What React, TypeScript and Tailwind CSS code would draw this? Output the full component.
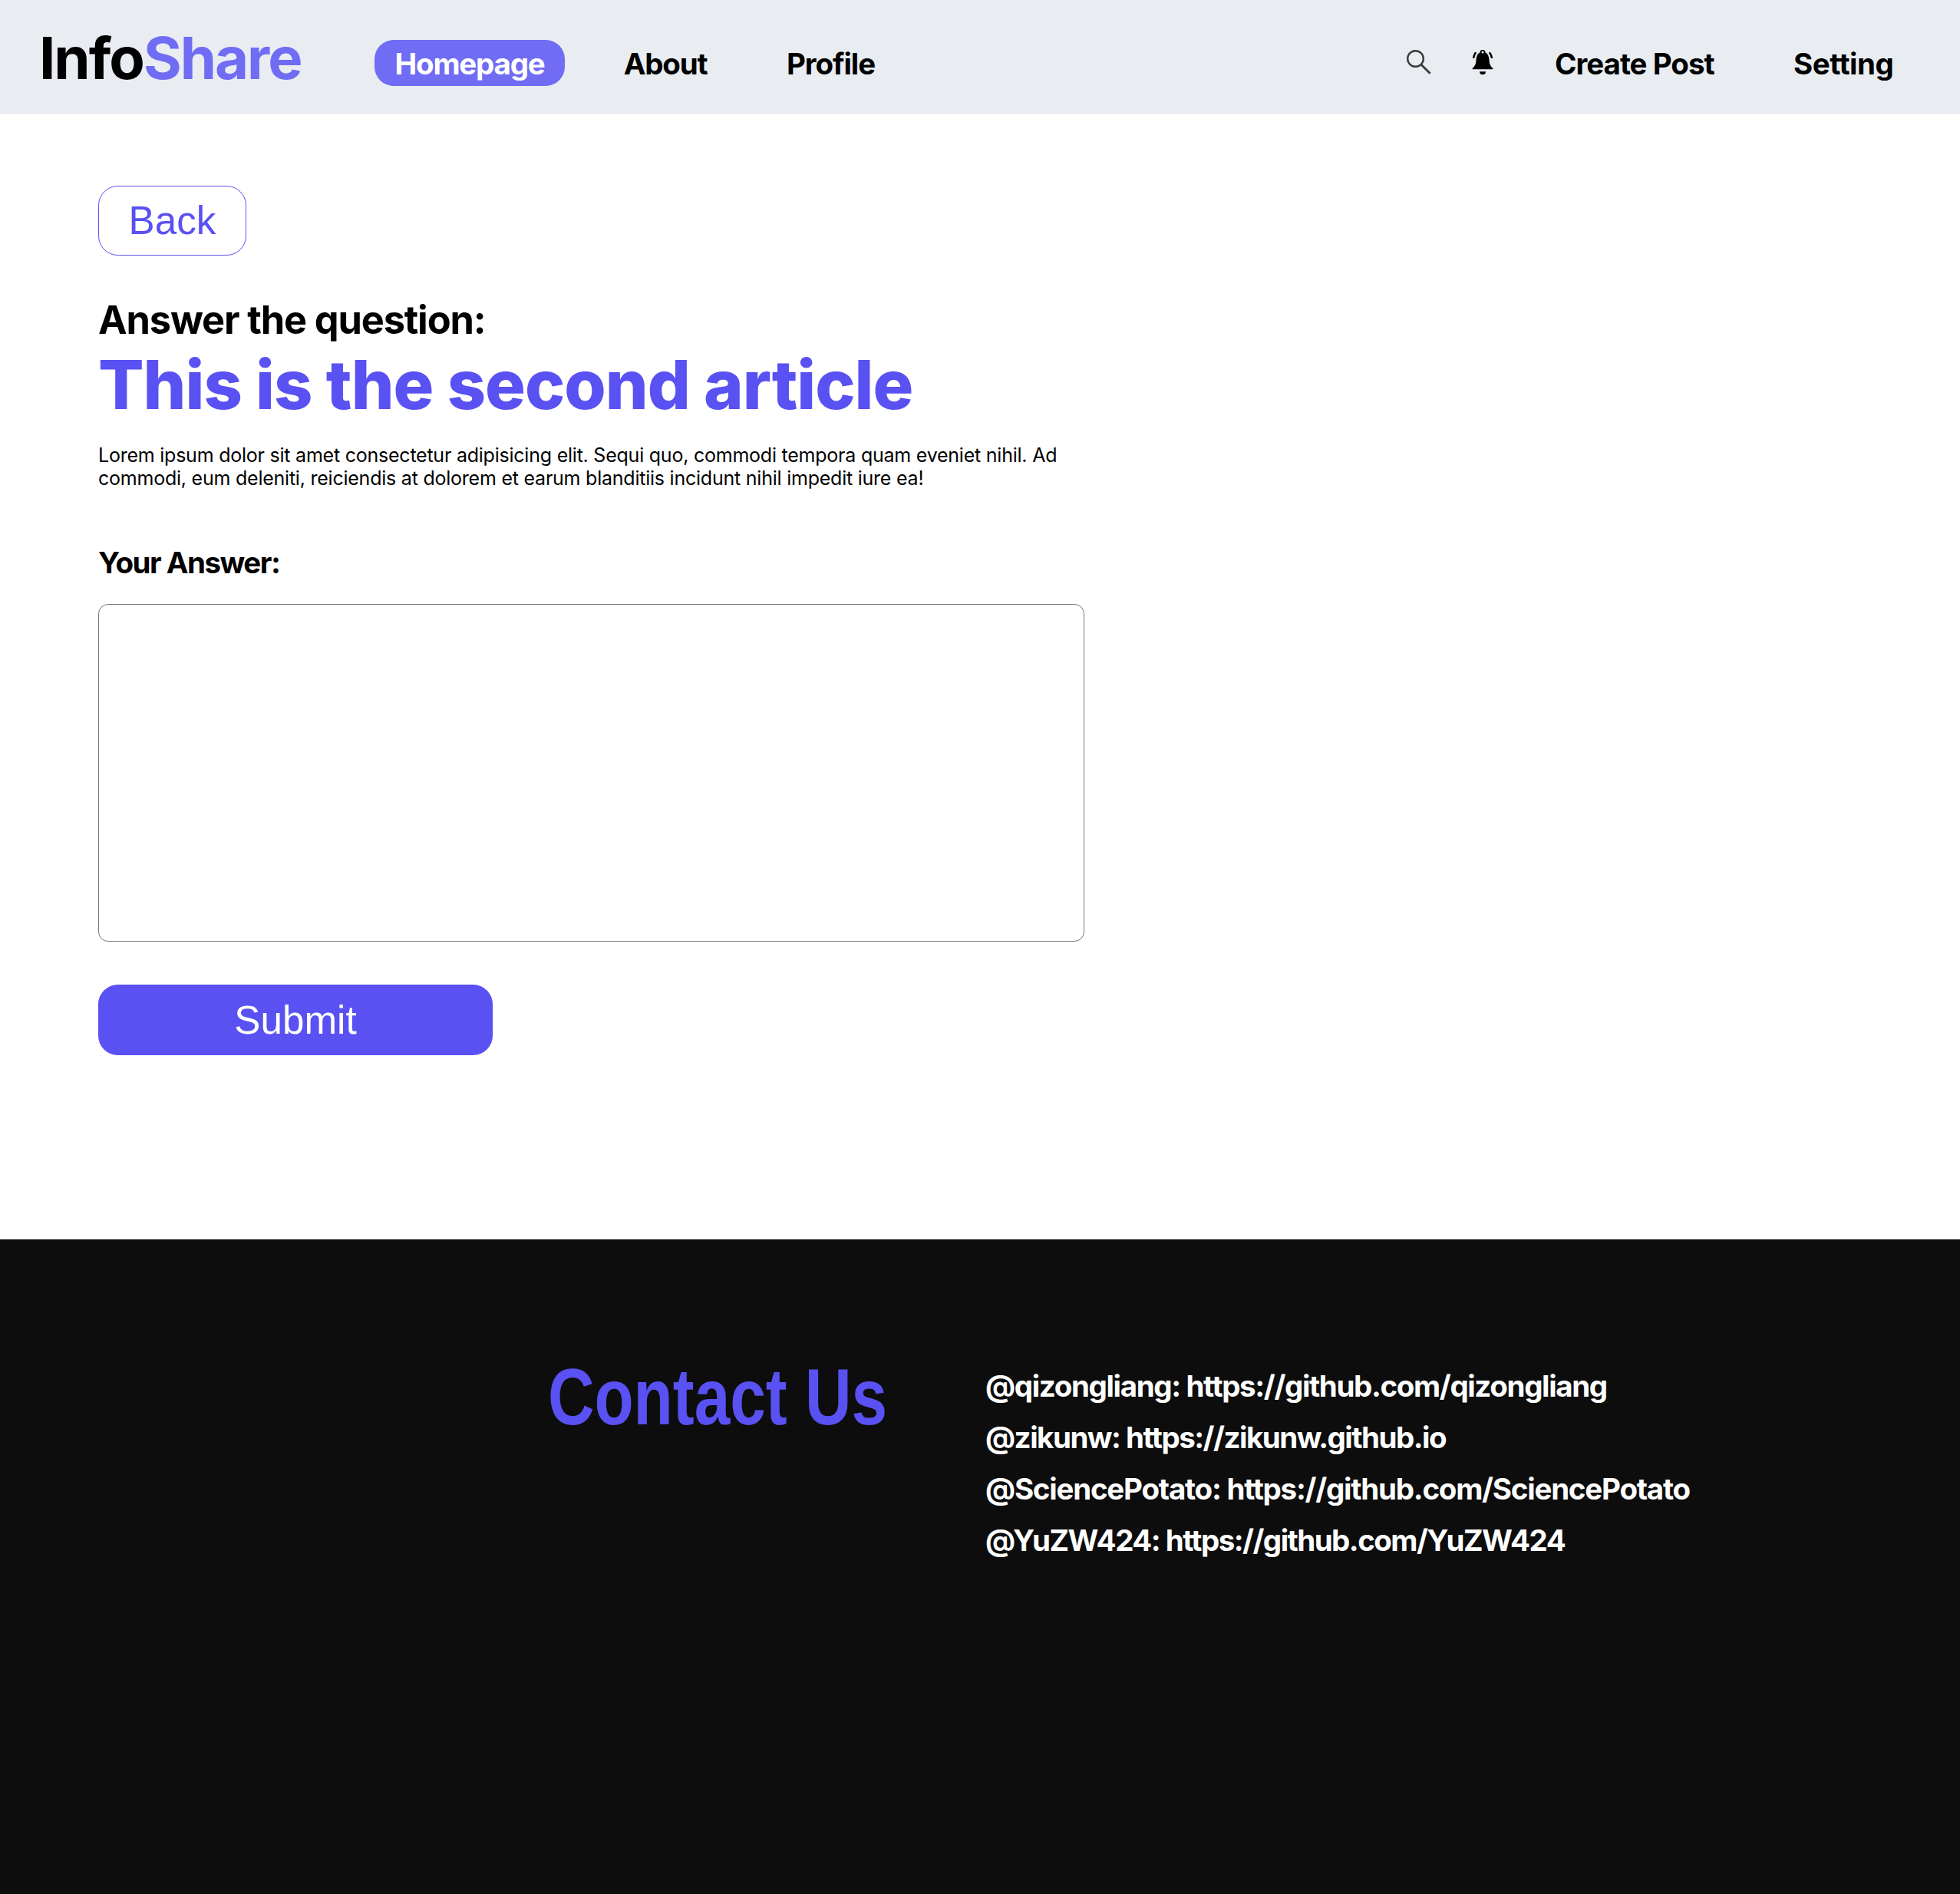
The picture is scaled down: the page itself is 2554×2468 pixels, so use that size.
import { useState } from "react";

const leftLinks = [
	{ label: "Homepage", style: "ml-[95px] w-[248px] bg-[#706cf3] text-white tracking-[-1.2px]" },
	{ label: "About", style: "ml-[51px] w-[160px] tracking-[-1.2px]" },
	{ label: "Profile", style: "ml-[53px] w-[165px] tracking-[-1.1px]" },
];

const contacts = [
	{ name: "@qizongliang", url: "https://github.com/qizongliang", style: "tracking-[-1.36px]" },
	{ name: "@zikunw", url: "https://zikunw.github.io", style: "tracking-[-1.5px]" },
	{ name: "@SciencePotato", url: "https://github.com/SciencePotato", style: "tracking-[-1.23px]" },
	{ name: "@YuZW424", url: "https://github.com/YuZW424", style: "tracking-[-1.53px]" },
];

function SearchIcon() {
	return (
		<svg className="block h-8 w-8" viewBox="0 0 32 32" fill="none" stroke="#3a3a3a">
			<circle cx="11.5" cy="11.5" r="10.3" strokeWidth="2.4" />
			<path d="M19 19.2 30.6 30.8" strokeWidth="2.8" />
		</svg>
	);
}

function BellIcon() {
	return (
		<svg className="block h-8 w-7" viewBox="0 0 28 32">
			<path d="M10.3 3.5A3.7 3.7 0 0 1 17.7 3.5C21 5.2 22.3 8.6 22.5 13c.2 5 1.3 8 4.9 11.2v1.1H.6v-1.1C4.2 21 5.3 18 5.5 13 5.7 8.6 7 5.2 10.3 3.5Z" />
			<circle cx="14" cy="2.9" r="1.5" fill="#e9edf2" />
			<path d="M10 28.3h8a4 4 0 0 1-8 0Z" />
			<path d="M5.2 3.2C3.5 5.3 2.3 7.8 1.9 10.7M22.8 3.2c1.7 2.1 2.9 4.6 3.3 7.5" fill="none" stroke="#000" strokeWidth="2.6" />
		</svg>
	);
}

export default function App() {
	const [answer, setAnswer] = useState("");

	return (
		<div className="flex min-h-[2468px] w-full flex-col bg-white font-['Inter',sans-serif] text-black">
			<nav className="flex h-[149px] items-center justify-between bg-[#e9edf2] text-[38.5px] leading-[62px] font-bold">
				<div className="flex items-center pl-[51px]">
					<h1 className="w-[342px] pt-px text-[76px] leading-[148px] font-bold tracking-[-2px] whitespace-nowrap">
						Info<span className="text-[#706cf3]">Share</span>
					</h1>
					{leftLinks.map((link) => (
						<a key={link.label} className={`mt-[15px] h-[60px] rounded-[25px] text-center ${link.style}`}>
							{link.label}
						</a>
					))}
				</div>
				<div className="flex items-center pt-[17px] pr-[87px]">
					<div className="mr-[53px] mb-[5px]">
						<SearchIcon />
					</div>
					<div className="mr-[80px] mb-[5px]">
						<BellIcon />
					</div>
					<a className="w-[212px] tracking-[-1px] whitespace-nowrap">Create Post</a>
					<a className="ml-[99px] w-[130px] tracking-[-0.5px] whitespace-nowrap">Setting</a>
				</div>
			</nav>

			<main className="h-[1466px] px-32 pt-[93px]">
				<button className="block h-[91px] w-[193px] rounded-[25.6px] border border-[#5951f2] font-['Liberation_Sans',sans-serif] text-[51.2px] leading-none text-[#5951f2]">
					Back
				</button>
				<h2 className="mt-[54px] text-[50.5px] leading-[60px] font-bold tracking-[-1.15px]">Answer the question:</h2>
				<h1 className="mt-[4px] text-[88px] leading-[100px] font-extrabold tracking-[-1px] text-[#5951f2]">
					This is the second article
				</h1>
				<p className="mt-[27px] w-[1285px] text-[25px] leading-[30px] tracking-[-0.23px] whitespace-nowrap">
					Lorem ipsum dolor sit amet consectetur adipisicing elit. Sequi quo, commodi tempora quam eveniet nihil. Ad
					<br />
					commodi, eum deleniti, reiciendis at dolorem et earum blanditiis incidunt nihil impedit iure ea!
				</p>
				<h3 className="mt-[70px] text-[38.5px] leading-[50px] font-bold tracking-[-1.5px]">Your Answer:</h3>
				<textarea
					value={answer}
					onChange={(e) => setAnswer(e.target.value)}
					className="mt-[29px] block h-[440px] w-[1285px] resize-none rounded-[12.8px] border border-[#767676] p-4 text-2xl"
				/>
				<button className="mt-14 block h-[92px] w-[514px] rounded-[25.6px] bg-[#5951f2] pt-px font-['Liberation_Sans',sans-serif] text-[51.2px] leading-none text-white">
					Submit
				</button>
			</main>

			<footer className="flex flex-1 items-start bg-[#0d0d0d] pt-[158px] pl-[714px]">
				<h1 className="-mt-[11px] w-[570px] origin-left scale-x-[0.813] font-['Liberation_Sans',sans-serif] text-[103px] leading-[118px] font-bold whitespace-nowrap text-[#5951f2]">
					Contact Us
				</h1>
				<ul className="text-[38.5px] leading-[67px] font-bold whitespace-nowrap text-white">
					{contacts.map((c) => (
						<li key={c.name} className={c.style}>
							{c.name}: {c.url}
						</li>
					))}
				</ul>
			</footer>
		</div>
	);
}
